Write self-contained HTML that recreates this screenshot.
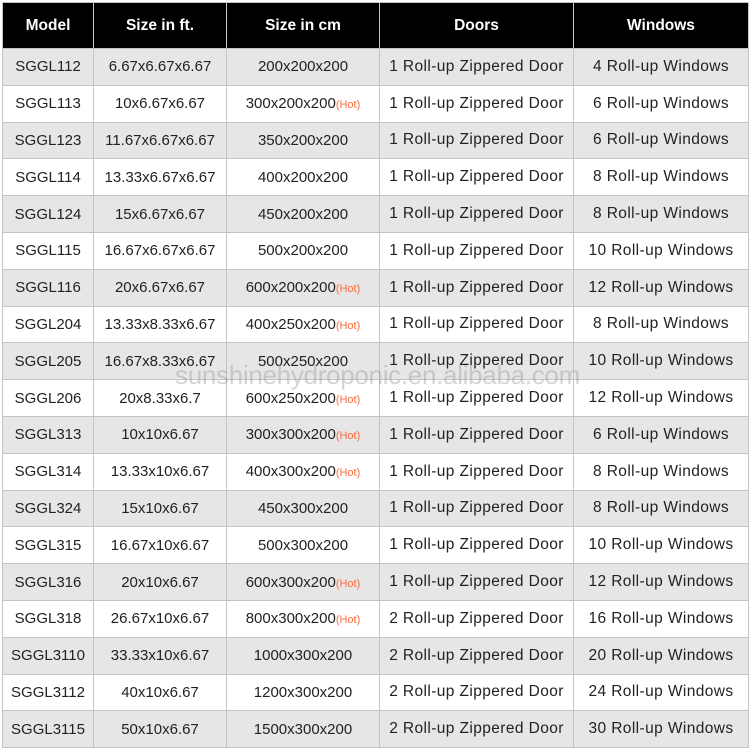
<!DOCTYPE html>
<html><head><style>
body{margin:0;width:750px;height:750px;background:#fff;position:relative;overflow:hidden;font-family:"Liberation Sans","DejaVu Sans",sans-serif;}
table{position:absolute;left:2px;top:2px;border-collapse:collapse;table-layout:fixed;}
td,th{border:1px solid #c4c4c4;text-align:center;padding:0;font-size:15px;color:#222;white-space:nowrap;}
th{background:#000;color:#fff;font-weight:bold;height:45px;font-size:15.5px;}
td{height:35.8px;}
td:nth-child(4),td:nth-child(5){letter-spacing:0.4px;font-size:15.5px;}
tr.g td{background:#e6e6e6;}
.h{color:#ff6a3c;font-size:11px;letter-spacing:0;}
.wm{position:absolute;left:175px;top:360px;font-size:26px;color:rgba(150,150,150,0.4);letter-spacing:-0.3px;}
</style></head><body>
<table>
<colgroup><col style="width:91px"><col style="width:133px"><col style="width:153px"><col style="width:194px"><col style="width:175px"></colgroup>
<tr><th>Model</th><th>Size in ft.</th><th>Size in cm</th><th>Doors</th><th>Windows</th></tr>
<tr class="g"><td>SGGL112</td><td>6.67x6.67x6.67</td><td>200x200x200</td><td>1 Roll-up Zippered Door</td><td>4 Roll-up Windows</td></tr>
<tr><td>SGGL113</td><td>10x6.67x6.67</td><td>300x200x200<span class="h">(Hot)</span></td><td>1 Roll-up Zippered Door</td><td>6 Roll-up Windows</td></tr>
<tr class="g"><td>SGGL123</td><td>11.67x6.67x6.67</td><td>350x200x200</td><td>1 Roll-up Zippered Door</td><td>6 Roll-up Windows</td></tr>
<tr><td>SGGL114</td><td>13.33x6.67x6.67</td><td>400x200x200</td><td>1 Roll-up Zippered Door</td><td>8 Roll-up Windows</td></tr>
<tr class="g"><td>SGGL124</td><td>15x6.67x6.67</td><td>450x200x200</td><td>1 Roll-up Zippered Door</td><td>8 Roll-up Windows</td></tr>
<tr><td>SGGL115</td><td>16.67x6.67x6.67</td><td>500x200x200</td><td>1 Roll-up Zippered Door</td><td>10 Roll-up Windows</td></tr>
<tr class="g"><td>SGGL116</td><td>20x6.67x6.67</td><td>600x200x200<span class="h">(Hot)</span></td><td>1 Roll-up Zippered Door</td><td>12 Roll-up Windows</td></tr>
<tr><td>SGGL204</td><td>13.33x8.33x6.67</td><td>400x250x200<span class="h">(Hot)</span></td><td>1 Roll-up Zippered Door</td><td>8 Roll-up Windows</td></tr>
<tr class="g"><td>SGGL205</td><td>16.67x8.33x6.67</td><td>500x250x200</td><td>1 Roll-up Zippered Door</td><td>10 Roll-up Windows</td></tr>
<tr><td>SGGL206</td><td>20x8.33x6.7</td><td>600x250x200<span class="h">(Hot)</span></td><td>1 Roll-up Zippered Door</td><td>12 Roll-up Windows</td></tr>
<tr class="g"><td>SGGL313</td><td>10x10x6.67</td><td>300x300x200<span class="h">(Hot)</span></td><td>1 Roll-up Zippered Door</td><td>6 Roll-up Windows</td></tr>
<tr><td>SGGL314</td><td>13.33x10x6.67</td><td>400x300x200<span class="h">(Hot)</span></td><td>1 Roll-up Zippered Door</td><td>8 Roll-up Windows</td></tr>
<tr class="g"><td>SGGL324</td><td>15x10x6.67</td><td>450x300x200</td><td>1 Roll-up Zippered Door</td><td>8 Roll-up Windows</td></tr>
<tr><td>SGGL315</td><td>16.67x10x6.67</td><td>500x300x200</td><td>1 Roll-up Zippered Door</td><td>10 Roll-up Windows</td></tr>
<tr class="g"><td>SGGL316</td><td>20x10x6.67</td><td>600x300x200<span class="h">(Hot)</span></td><td>1 Roll-up Zippered Door</td><td>12 Roll-up Windows</td></tr>
<tr><td>SGGL318</td><td>26.67x10x6.67</td><td>800x300x200<span class="h">(Hot)</span></td><td>2 Roll-up Zippered Door</td><td>16 Roll-up Windows</td></tr>
<tr class="g"><td>SGGL3110</td><td>33.33x10x6.67</td><td>1000x300x200</td><td>2 Roll-up Zippered Door</td><td>20 Roll-up Windows</td></tr>
<tr><td>SGGL3112</td><td>40x10x6.67</td><td>1200x300x200</td><td>2 Roll-up Zippered Door</td><td>24 Roll-up Windows</td></tr>
<tr class="g"><td>SGGL3115</td><td>50x10x6.67</td><td>1500x300x200</td><td>2 Roll-up Zippered Door</td><td>30 Roll-up Windows</td></tr>
</table>
<div class="wm">sunshinehydroponic.en.alibaba.com</div>
</body></html>
